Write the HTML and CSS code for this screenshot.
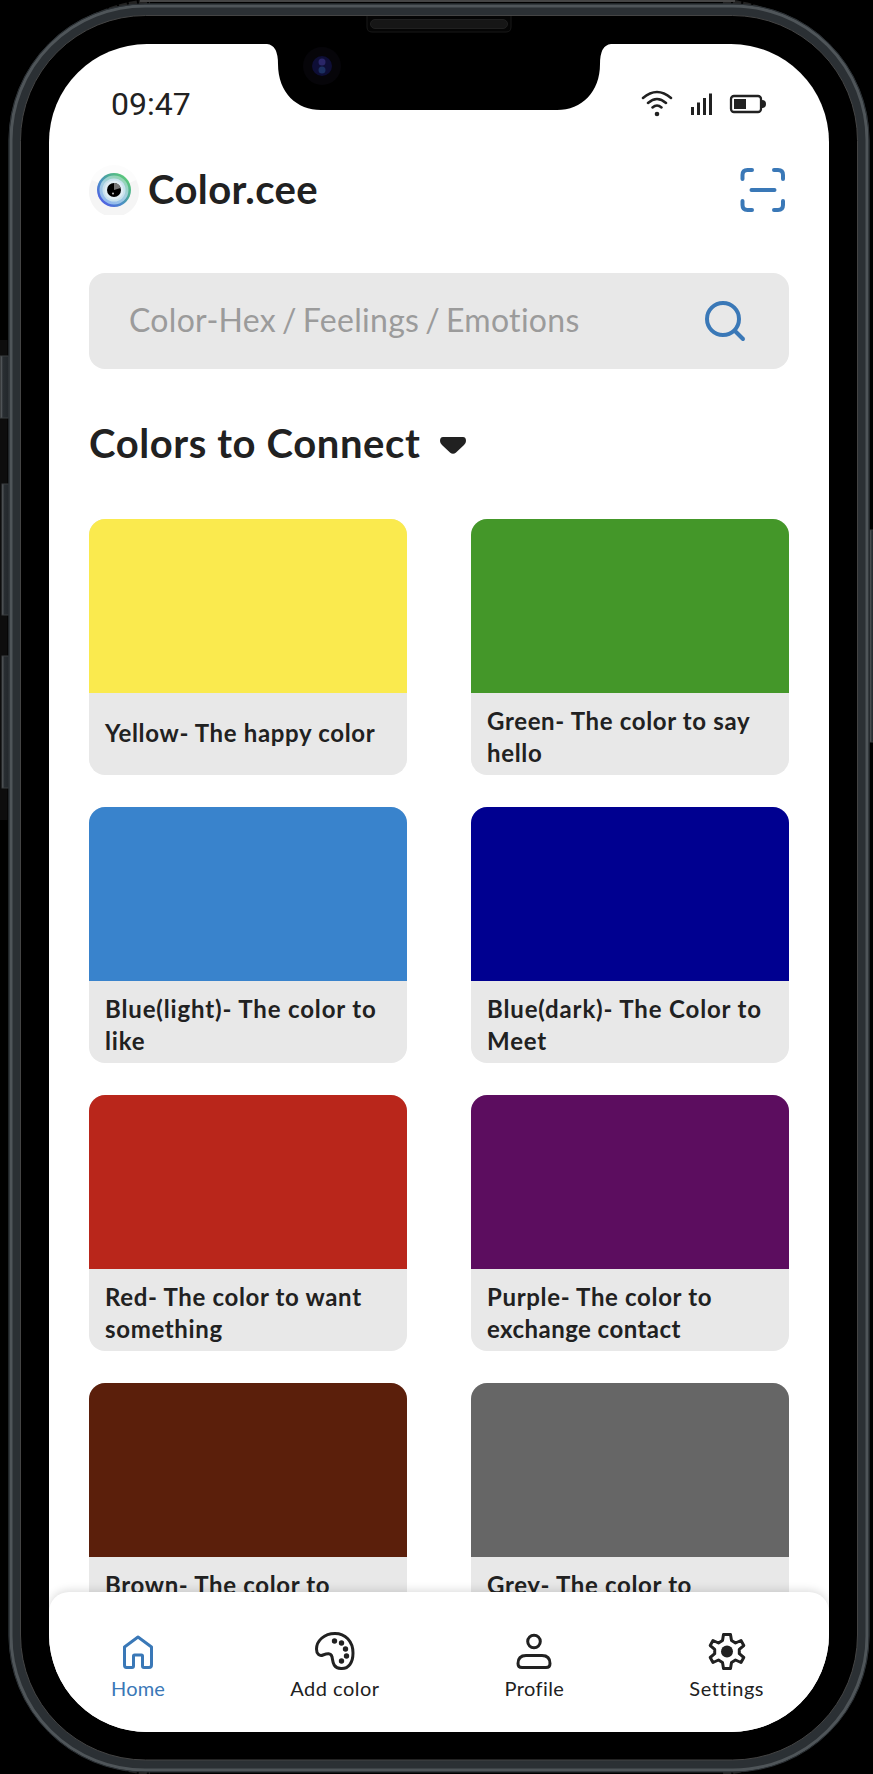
FILE: index.html
```
<!DOCTYPE html>
<html lang="en">
<head>
<meta charset="utf-8">
<title>Color.cee</title>
<link rel="stylesheet" href="styles.css">
</head>
<body>
<div class="stage">
  <svg class="device" viewBox="0 0 873 1774" aria-hidden="true">
    <defs>
      <linearGradient id="btn"><stop offset="0" stop-color="#6a6e71"/><stop offset=".3" stop-color="#292e32"/><stop offset="1" stop-color="#22272b"/></linearGradient>
    </defs>
    <path d="M12 150C24 60 75 8 150 2" fill="none" stroke="#222" stroke-width="6" stroke-dasharray="8 2"/>
    <path d="M723 2C798 8 852 60 866 150" fill="none" stroke="#222" stroke-width="6" stroke-dasharray="8 2"/>
    <path d="M12 1624C24 1714 75 1766 150 1772M723 1772C798 1766 852 1714 866 1624" fill="none" stroke="#222" stroke-width="6" stroke-dasharray="8 2"/>
    <path d="M140 1H735" stroke="#444" stroke-width="2"/>
    <path d="M0 340V820" stroke="#0d0d0d" stroke-width="15"/>
    <g fill="url(#btn)" stroke="#3b3e40">
      <rect x="0.5" y="356" width="8" height="62"/><rect x="2" y="484" width="7" height="131"/><rect x="2" y="656" width="7" height="132"/>
      <rect x="870" y="530" width="6" height="212"/>
    </g>
    <rect x="14.500" y="9.500" width="849" height="1756.500" rx="131" fill="#000" stroke="#2b3034" stroke-width="12"/>
    <rect x="11" y="6" width="856" height="1764" rx="134" fill="none" stroke="#4f5559" stroke-width="3"/>
    <rect x="9" y="4" width="860" height="1768" rx="136" fill="none" stroke="#2b3034" stroke-width="1"/>
    <rect x="20.500" y="15.500" width="837" height="1744.500" rx="125" fill="none" stroke="#444" stroke-width="1"/>
    <path d="M367 16V27Q367 32 372 32H506Q511 32 511 27V16" fill="#050505" stroke="#181818"/>
    <rect x="370.500" y="19.500" width="137" height="9" rx="4.500" fill="#161616" stroke="#202020"/>
  </svg>
  <main class="screen">
    <header class="status">
      <span class="time">09:47</span>
      <svg class="status-icons" viewBox="0 0 126 28" fill="none" stroke="#212121">
        <g stroke-width="2.500" stroke-linecap="round"><path d="M2 8Q16 -4 30 8M7 13Q16 5 25 13M11.500 17.500Q16 13.500 20.500 17.500"/></g>
        <circle cx="16" cy="24" r="2.300" fill="#212121" stroke="none"/>
        <path d="M51.500 17V25M57.500 12.500V25M63.500 8V25M69.500 3.500V25" stroke-width="3"/>
        <rect x="90" y="6" width="30" height="16" rx="3" stroke-width="2.300"/>
        <path d="M93 9H105V19H93Z" fill="#212121" stroke="none"/>
        <path d="M121 10Q125 10 125 14Q125 18 121 18Z" fill="#212121" stroke="none"/>
      </svg>
    </header>
    <div class="topbar">
      <div class="brand">
        <svg class="eye" viewBox="0 0 50 50">
          <defs>
            <linearGradient id="ring" x1=".85" y1=".1" x2=".15" y2=".8"><stop offset="0" stop-color="#5ccb78"/><stop offset=".4" stop-color="#4aa59c"/><stop offset=".65" stop-color="#4b8fc6"/><stop offset="1" stop-color="#4f66e0"/></linearGradient>
            <linearGradient id="iris" x1=".8" y1="0" x2=".2" y2="1"><stop offset="0" stop-color="#8fd6a8"/><stop offset=".5" stop-color="#a5cfe2"/><stop offset="1" stop-color="#8fb5f0"/></linearGradient>
          </defs>
          <circle cx="25" cy="25" r="25" fill="#fcfcfc"/><path d="M3 15L25 25L47 15A25 25 0 1 1 3 15" fill="#f5f5f5"/>
          <circle cx="25" cy="25" r="17" fill="url(#ring)"/><circle cx="25" cy="25" r="14.500" fill="url(#iris)"/><circle cx="25" cy="25" r="11.500" fill="#c9e2ee"/><circle cx="25" cy="25" r="9.500" fill="#e0eef5"/>
          <circle cx="25" cy="25" r="7" fill="#000"/><path d="M25 25V18A7 7 0 0 1 31.500 23Z" fill="#777"/><circle cx="24" cy="28.500" r="1" fill="#ccc"/>
        </svg>
        <h1 class="title name">Color.cee</h1>
      </div>
      <svg class="scan" viewBox="0 0 46 46" fill="none" stroke="#3a78b7" stroke-width="4" stroke-linecap="round" stroke-linejoin="round"><path d="M2.500 12V8Q2.500 3 7.500 3H12M34 3H38Q43 3 43 8V12M43 34V38Q43 43 38 43H34M12 43H7.500Q2.500 43 2.500 38V34M11.500 23H34.500"/></svg>
    </div>
    <div class="search">
      <span class="placeholder">Color-Hex / Feelings / Emotions</span>
      <svg class="magnifier" viewBox="0 0 41 41" fill="none" stroke="#3a78b7" stroke-width="4"><circle cx="18" cy="18" r="16"/><path d="M30 30L38 38" stroke-linecap="round"/></svg>
    </div>
    <div class="section">
      <h2 class="title heading">Colors to Connect</h2>
      <svg class="caret" viewBox="0 0 26 17"><path d="M3 0H23Q26 0 26 4Q26 6 24 8L16 15.500Q13 18 10 15.500L2 8Q0 6 0 4Q0 0 3 0" fill="#212121"/></svg>
    </div>
    <section class="grid">
      <article class="card"><div class="swatch yellow"></div><p class="label single">Yellow- The happy color</p></article>
      <article class="card"><div class="swatch green"></div><p class="label">Green- The color to say<br>hello</p></article>
      <article class="card"><div class="swatch light-blue"></div><p class="label wide">Blue(light)- The color to<br>like</p></article>
      <article class="card"><div class="swatch dark-blue"></div><p class="label wide">Blue(dark)- The Color to<br>Meet</p></article>
      <article class="card"><div class="swatch red"></div><p class="label">Red- The color to want<br>something</p></article>
      <article class="card"><div class="swatch purple"></div><p class="label">Purple- The color to<br><span class="narrow">exchange contact</span></p></article>
      <article class="card"><div class="swatch brown"></div><p class="label">Brown- The color to</p></article>
      <article class="card"><div class="swatch grey"></div><p class="label">Grey- The color to</p></article>
    </section>
    <nav class="nav">
      <a class="item active"><svg class="icon" viewBox="0 0 40 40"><path d="M6.500 15L20 5L33.500 15V33Q33.500 35.500 31 35.500H26Q24.500 35.500 24.500 34V24Q24.500 23 23.500 23H16.500Q15.500 23 15.500 24V34Q15.500 35.500 14 35.500H8.500Q6.500 35.500 6.500 33Z"/></svg><span class="home">Home</span></a>
      <a class="item"><svg class="icon" viewBox="0 0 40 40"><path d="M20 1.500C9 1.500 1.500 9 1.500 17C1.500 22 4.500 24.500 8 23C12 21.500 16 20.500 17 25C18 28 17 36 26 36.500C34 37 38 30 38 21C38 9 30 1.500 20 1.500Z"/><g fill="currentColor" stroke="none"><circle cx="19.500" cy="9" r="2.700"/><circle cx="26.500" cy="11" r="2.700"/><circle cx="30.500" cy="17" r="2.700"/><circle cx="31.500" cy="24" r="2.700"/><circle cx="26.500" cy="29" r="2.700"/></g></svg><span class="add">Add color</span></a>
      <a class="item"><svg class="icon" viewBox="0 0 40 40"><circle cx="20" cy="9.500" r="6.300"/><path d="M12 23.500H28Q36 23.500 36 31.500Q36 35.500 32 35.500H8Q4 35.500 4 31.500Q4 23.500 12 23.500Z"/></svg><span class="profile">Profile</span></a>
      <a class="item"><svg class="icon" viewBox="0 0 40 40"><path d="M16.500 2.500H23.500L24.500 8.500L28.500 11L34 8.500L36.800 13.500L32.300 17.300V21.700L36.800 25.500L34 30.500L28.500 28L24.500 30.500L23.500 36.500H16.500L15.500 30.500L11.500 28L6 30.500L3.200 25.500L7.700 21.700V17.300L3.200 13.500L6 8.500L11.500 11L15.500 8.500Z"/><circle cx="20" cy="19.500" r="6" fill="currentColor" stroke="none"/></svg><span class="settings">Settings</span></a>
    </nav>
  </main>
  <svg class="notch" viewBox="0 0 346 68" aria-hidden="true"><path d="M0 0Q11 1 11 20C11 49 30 66 54 66H290C315 66 333 48 333 20Q333 1 344 0Z" fill="#000"/><circle cx="55" cy="22" r="19" fill="#060509"/><circle cx="55" cy="22" r="10" fill="#0e0e36"/><circle cx="55" cy="18" r="3.500" fill="#2a2668"/><circle cx="55" cy="26" r="3.500" fill="#1b3060"/></svg>
</div>
</body>
</html>
```
FILE: styles.css
```
* { box-sizing: border-box; }
body { margin: 0; background: #000; font-family: Lato, "Noto Sans", sans-serif; color: #212121; }
h1, h2, p { margin: 0; }
svg { display: block; flex: none; }
.stage { position: relative; width: 873px; height: 1774px; padding: 44px 44px 42px 49px; overflow: hidden; }
.device { position: absolute; left: 0; top: 0; width: 873px; height: 1774px; }
.screen { position: relative; width: 780px; height: 1688px; display: flex; flex-direction: column; background: #fff; overflow: hidden; border-radius: 98px; }
.notch { position: absolute; left: 267px; top: 44px; width: 346px; height: 68px; }
.status { display: flex; justify-content: space-between; padding: 40px 62px 0; height: 94px; }
.time { font: 32px/40px Roboto, sans-serif; }
.status-icons { width: 126px; height: 28px; margin-top: 6px; }
.topbar { display: flex; justify-content: space-between; align-items: center; height: 104px; padding: 0 43px 0 40px; }
.brand { display: flex; align-items: center; gap: 9px; }
.eye { width: 50px; height: 50px; }
.scan { width: 46px; height: 46px; }
.title { font-size: 40px; line-height: 50px; font-weight: 700; white-space: nowrap; padding-bottom: 2px; }
.name { letter-spacing: 0.4px; }
.heading { letter-spacing: 0.6px; }
.search { display: flex; flex: none; justify-content: space-between; align-items: center; height: 96px; margin: 31px 40px 0; padding: 0 43px 0 40px; border-radius: 16px; background: #e8e8e8; }
.placeholder { padding-bottom: 3px; color: #9b9b9b; font-size: 32px; letter-spacing: 0.3px; word-spacing: -2.5px; white-space: nowrap; }
.magnifier { width: 41px; height: 41px; }
.section { display: flex; flex: none; align-items: center; gap: 20px; height: 150px; padding: 0 40px; }
.caret { width: 26px; height: 17px; margin-top: 3px; }
.grid { display: grid; flex: none; grid-template-columns: 318px 318px; grid-auto-rows: 256px; column-gap: 64px; row-gap: 32px; height: 1073px; padding: 0 40px; overflow: hidden; }
.card { overflow: hidden; border-radius: 16px; background: #e8e8e8; }
.swatch { height: 174px; }
.yellow { background: #faea4e; }
.green { background: #449729; }
.light-blue { background: #3983cc; }
.dark-blue { background: #000090; }
.red { background: #b9261b; }
.purple { background: #5c0d5f; }
.brown { background: #5b1f0b; }
.grey { background: #666; }
.label { padding: 12px 0 0 16px; font-size: 24px; line-height: 32px; font-weight: 700; letter-spacing: 0.66px; white-space: nowrap; }
.single { padding-top: 24px; }
.wide { letter-spacing: 0.85px; }
.narrow { letter-spacing: 0.45px; }
.nav { position: relative; display: flex; flex: none; justify-content: space-between; height: 140px; padding: 40px 65px 0 62px; background: #fff; border-radius: 20px 20px 0 0; box-shadow: 0 -2px 8px #0002; }
.item { display: flex; flex-direction: column; align-items: center; gap: 2px; font-size: 20px; line-height: 28px; white-space: nowrap; }
.active { color: #3a78b7; }
.home { letter-spacing: 0.2px; }
.add { letter-spacing: 0.5px; }
.profile { letter-spacing: 0.4px; }
.settings { letter-spacing: 0.5px; }
.icon { width: 40px; height: 40px; fill: none; stroke: currentColor; stroke-width: 3; stroke-linejoin: round; }
```
